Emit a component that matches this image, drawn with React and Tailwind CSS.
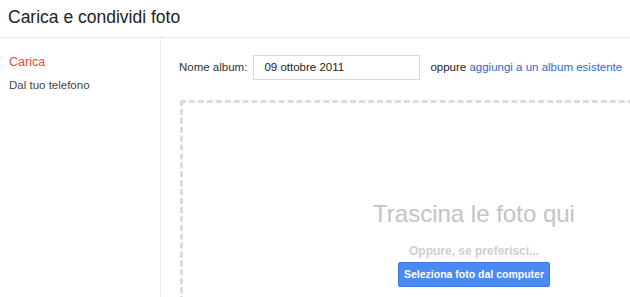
import React from 'react';

const App = () => {
  return (
    <div className="w-[630px] h-[297px] overflow-hidden bg-white font-['Liberation_Sans',Arial,sans-serif]">
      {/* Title bar */}
      <header className="h-[38px] border-b border-[#ebebeb] pl-2 pt-[5px] text-[17.5px] leading-[24px] text-[#222]">
        Carica e condividi foto
      </header>

      <div className="flex h-[259px]">
        {/* Left nav */}
        <aside className="w-[161px] shrink-0 border-r border-[#ebebeb] pl-[9px] pt-[16px]">
          <div className="text-[12.5px] leading-[16px] text-[#dd4b39]">Carica</div>
          <div className="mt-[7px] text-[11.5px] leading-[16px] text-[#444]">Dal tuo telefono</div>
        </aside>

        {/* Upload area */}
        <main className="flex-1 min-w-0 pl-[18px] pt-[17px]">
          <div className="flex items-center h-[25px] text-[11.5px] whitespace-nowrap">
            <span className="text-[#333]">Nome album:</span>
            <div className="ml-[6px] w-[167px] h-[25px] shrink-0 border border-[#d9d9d9] px-[10px] flex items-center text-[#222]">
              09 ottobre 2011
            </div>
            <span className="ml-[10px] text-[#222]">
              oppure <a className="text-[#3366cc] cursor-pointer">aggiungi a un album esistente</a>
            </span>
          </div>

          <div className="mt-[20px] ml-[1px] w-[588px] h-[300px] shrink-0 border-[3px] border-dashed border-[#dcdcdc] flex flex-col items-center pt-[97px]">
            <div className="text-[24px] leading-[28px] text-[#c4c4c4]">Trascina le foto qui</div>
            <div className="mt-[15px] text-[12px] leading-[16px] font-bold text-[#cfcfcf]">Oppure, se preferisci...</div>
            <button className="mt-[3px] w-[152px] h-[25px] rounded-[2px] border border-[#3b7ae0] bg-[#4a8af4] text-white text-[10.5px] font-bold">
              Seleziona foto dal computer
            </button>
          </div>
        </main>
      </div>
    </div>
  );
};

export default App;
